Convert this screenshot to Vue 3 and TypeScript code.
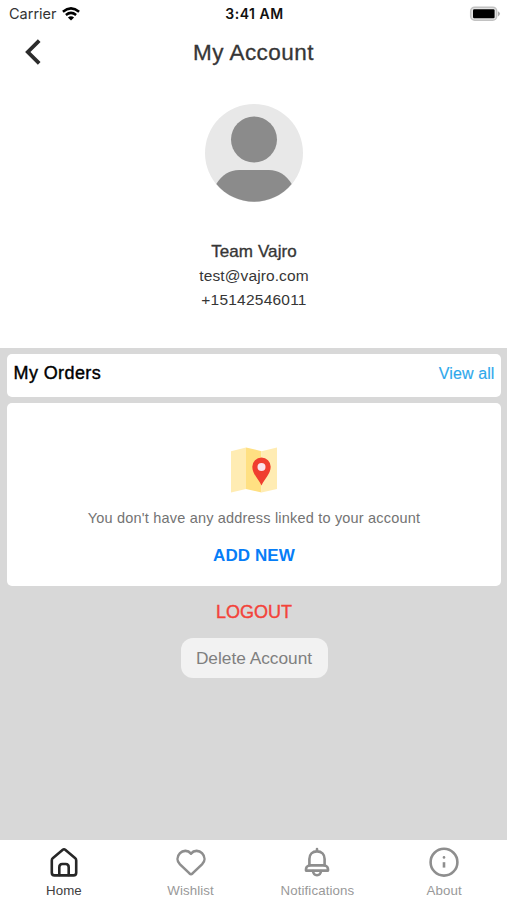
<script setup lang="ts">
import { ref } from 'vue'

type TabId = 'home' | 'wishlist' | 'notifications' | 'about'

interface Tab {
  id: TabId
  label: string
}

const tabs: Tab[] = [
  { id: 'home', label: 'Home' },
  { id: 'wishlist', label: 'Wishlist' },
  { id: 'notifications', label: 'Notifications' },
  { id: 'about', label: 'About' },
]

const activeTab = ref<TabId>('home')

const user = {
  name: 'Team Vajro',
  email: 'test@vajro.com',
  phone: '+15142546011',
}
</script>

<template>
  <div class="screen">
    <div class="status">
      <div class="carrier">
        <span>Carrier</span>
        <svg class="wifi" width="18" height="14" viewBox="0 0 18 14" fill="none" stroke="#000" stroke-width="2.5">
          <path d="M0.9 4.7Q9 -1.9 17.1 4.7" />
          <path d="M3.9 8Q9 3.8 14.1 8" />
          <path d="M9 13.6L5.9 10.5Q9 7.8 12.1 10.5Z" fill="#000" stroke="none" />
        </svg>
      </div>
      <span class="clock">3:41 AM</span>
      <svg class="battery" width="32" height="16" viewBox="0 0 32 16">
        <rect x="1.7" y="1.2" width="26" height="13" rx="4" fill="#e4e4e4" stroke="#c2c2c2" stroke-width="1.5" />
        <rect x="4" y="3.2" width="21.6" height="9" rx="1.2" fill="#000" />
        <path d="M29 5.2Q33 7.8 29 10.5Z" fill="#aaa" />
      </svg>
    </div>

    <header class="header">
      <button class="back" aria-label="Back">
        <svg width="18" height="28" viewBox="0 0 18 28" fill="none" stroke="#2c2c2c" stroke-width="3.8">
          <path d="M15.2 2.6L3.8 14L15.2 25.4" />
        </svg>
      </button>
      <h1 class="title">My Account</h1>
    </header>

    <section class="profile">
      <svg class="avatar" width="98" height="98" viewBox="0 0 98 98">
        <circle cx="49" cy="49" r="49" fill="#e8e8e8" />
        <circle cx="49" cy="35.5" r="23" fill="#8b8b8b" />
        <path d="M11.3 80Q20 66 34 66H64Q78 66 86.7 80A49 49 0 0 1 11.3 80Z" fill="#8b8b8b" />
      </svg>
      <div class="name"><span>{{ user.name }}</span></div>
      <div class="contact email"><span>{{ user.email }}</span></div>
      <div class="contact phone"><span>{{ user.phone }}</span></div>
    </section>

    <main class="content">
      <section class="card orders">
        <h2 class="orders-title">My Orders</h2>
        <a class="view-all">View all</a>
      </section>

      <section class="card address">
        <svg class="map" width="48" height="48" viewBox="0 0 48 48">
          <path d="M1 5.2L16 1.4V43L1 46.5Z" fill="#ffecb3" />
          <path d="M16 1.4L31.5 5.2V46.5L16 43Z" fill="#ffe082" />
          <path d="M31.5 5.2L47 1.4V43L31.5 46.5Z" fill="#ffecb3" />
          <path d="M31.5 39.5C28.5 33 22.3 28 22.3 20.8A9.2 9.2 0 0 1 40.7 20.8C40.7 28 34.5 33 31.5 39.5Z" fill="#f03e2f" />
          <circle cx="31.5" cy="21" r="4" fill="#fbe3ec" />
        </svg>
        <p class="empty">You don't have any address linked to your account</p>
        <button class="add">ADD NEW</button>
      </section>

      <button class="logout">LOGOUT</button>
      <button class="delete">Delete Account</button>
    </main>

    <nav class="tabbar">
      <button
        v-for="tab in tabs"
        :key="tab.id"
        class="tab"
        :class="[tab.id, { active: tab.id === activeTab }]"
        @click="activeTab = tab.id"
      >
        <svg width="32" height="32" viewBox="0 0 32 32" fill="none" stroke="currentColor" stroke-width="2.6" stroke-linecap="round" stroke-linejoin="round">
          <template v-if="tab.id === 'home'">
            <path d="M16 3.3Q16.6 3.3 17.2 3.8L27 11.9Q28.2 13 28.2 14.4V26.7Q28.2 29.4 25.5 29.4H6.5Q3.8 29.4 3.8 26.7V14.4Q3.8 13 5 11.9L14.8 3.8Q15.4 3.3 16 3.3Z" />
            <path d="M11.3 29V21.2Q11.3 18 14.3 18H17.7Q20.7 18 20.7 21.2V29" />
          </template>
          <path
            v-else-if="tab.id === 'wishlist'"
            d="M16 7.7C12.9 4 8 4.1 5 7.2C1.7 10.6 1.8 15.2 5 18.4L14.5 27.4Q16 28.7 17.5 27.4L27 18.4C30.2 15.2 30.3 10.6 27 7.2C24 4.1 19.1 4 16 7.7Z"
          />
          <template v-else-if="tab.id === 'notifications'">
            <path d="M16 3V5.4M8.4 19.4V13C8.4 8.4 11.5 5.4 16 5.4S23.6 8.4 23.6 13V19.4" />
            <path d="M8 19.4H24Q27 20.6 27 23.2V24.6H5V23.2Q5 20.6 8 19.4Z" />
            <path d="M12 25Q12.4 29.2 16 29.2T20 25" />
          </template>
          <template v-else>
            <circle cx="16" cy="16.2" r="13.4" />
            <path d="M16 16.2V21.6" stroke-linecap="butt" />
            <path d="M16 11.2V11.4" />
          </template>
        </svg>
        <span class="label">{{ tab.label }}</span>
      </button>
    </nav>
  </div>
</template>

<style>
body {
  margin: 0;
}
</style>

<style scoped>
.screen {
  display: flex;
  flex-direction: column;
  width: 507px;
  height: 900px;
  overflow: hidden;
  background: #fff;
  color: #363636;
  font-family: 'Liberation Sans', Arial, sans-serif;
}

button {
  border: 0;
  padding: 0;
  background: none;
  font-family: inherit;
  white-space: nowrap;
}

h1,
h2,
p {
  margin: 0;
  font-weight: 400;
}

.status {
  display: grid;
  grid-template-columns: 1fr auto 1fr;
  align-items: center;
  height: 27px;
  padding: 0 6px 0 9px;
  font-family: Inter, sans-serif;
  line-height: 27px;
}

.carrier {
  display: flex;
  align-items: center;
  gap: 5px;
  color: #333;
  font-size: 14.5px;
}

.clock {
  padding-right: 1px;
  color: #111;
  font-size: 14px;
  font-weight: 600;
  letter-spacing: 0.5px;
}

.battery {
  justify-self: end;
}

.header {
  display: grid;
  grid-template-columns: 60px 1fr 60px;
  align-items: center;
  height: 50px;
}

.back {
  display: flex;
  padding-left: 24px;
}

.title {
  padding-top: 1px;
  text-align: center;
  font-size: 22.5px;
  letter-spacing: 0.45px;
  -webkit-text-stroke: 0.3px;
}

.profile {
  display: flex;
  flex-direction: column;
  align-items: center;
  box-sizing: border-box;
  height: 271px;
  padding: 26.5px 0 0 1px;
}

.avatar {
  flex: none;
}

.name {
  margin-top: 37px;
  line-height: 25px;
  font-size: 17px;
  letter-spacing: 0.1px;
  -webkit-text-stroke: 0.35px;
}

.contact {
  line-height: 24px;
  font-size: 15.5px;
  letter-spacing: 0.1px;
}

.phone {
  letter-spacing: 0.22px;
}

.content {
  display: flex;
  flex: 1;
  flex-direction: column;
  align-items: center;
  padding: 6px 6px 0 7px;
  background: #d8d8d8;
}

.card {
  align-self: stretch;
  box-sizing: border-box;
  border-radius: 5px;
  background: #fff;
}

.orders {
  display: flex;
  align-items: center;
  justify-content: space-between;
  height: 43px;
  padding: 0 6.5px 4px 6.5px;
}

.orders-title {
  color: #000;
  font-size: 18px;
  letter-spacing: 0.4px;
  -webkit-text-stroke: 0.4px;
}

.view-all {
  color: #2fa8ec;
  font-size: 16px;
  letter-spacing: 0.1px;
  -webkit-text-stroke: 0.15px;
}

.address {
  display: flex;
  flex-direction: column;
  align-items: center;
  height: 183px;
  margin-top: 6px;
  padding-top: 43px;
}

.empty {
  margin-top: 14px;
  color: #737373;
  font-size: 14.5px;
  line-height: 20px;
  letter-spacing: 0.19px;
}

.add {
  margin-top: 18px;
  color: #067df7;
  font-size: 17px;
  font-weight: 700;
  line-height: 20px;
  letter-spacing: 0.1px;
}

.logout {
  margin-top: 15px;
  color: #f3433a;
  font-size: 18px;
  line-height: 22px;
  -webkit-text-stroke: 0.4px;
}

.delete {
  width: 147px;
  height: 40px;
  margin-top: 15px;
  padding-top: 1px;
  border-radius: 12px;
  background: #f2f2f2;
  color: #7f7f7f;
  font-size: 17.3px;
}

.tabbar {
  display: grid;
  grid-template-columns: repeat(4, 1fr);
  height: 60px;
  background: #fff;
}

.tab {
  display: flex;
  flex-direction: column;
  align-items: center;
  padding: 6px 0 0 1px;
  color: #8e8e8e;
}

.label {
  margin-top: 5px;
  color: #999;
  font-size: 13.3px;
  line-height: 16px;
  letter-spacing: 0.1px;
}

.tab.active {
  color: #272727;
}

.active .label {
  color: #404040;
}
</style>
